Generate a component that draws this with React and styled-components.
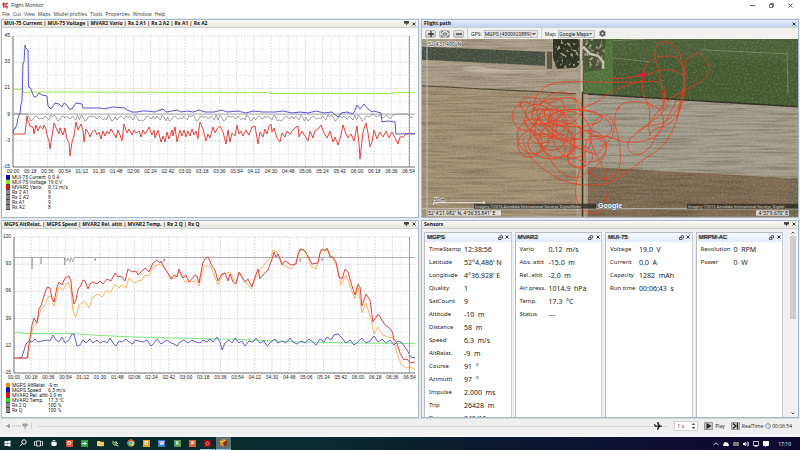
import styled, { createGlobalStyle } from 'styled-components'
import { FaShoppingBag, FaFolder, FaCloud, FaVolumeUp, FaDesktop, FaCommentAlt, FaWindows, FaCog } from 'react-icons/fa'

const GlobalStyle = createGlobalStyle`
  * {
    box-sizing: border-box;
  }

  body {
    margin: 0;
    background: #ffffff;
    color: #222222;
    font-family: "Open Sans", sans-serif;
    font-size: 5px;
    line-height: 8px;
  }

  button, input, select {
    font: inherit;
    color: inherit;
    margin: 0;
    padding: 0;
  }
`

const Window = styled.div`
  display: flex;
  flex-direction: column;
  height: 100vh;
  overflow: hidden;
`

const TitleBar = styled.header`
  display: flex;
  align-items: center;
  gap: 3px;
  height: 10px;
  padding: 0 6px 0 2px;
  background: #ffffff;
`

const Title = styled.h1`
  flex: 1;
  margin: 0;
  font-size: 5px;
  font-weight: 400;
`

const WindowButtons = styled.div`
  display: flex;
  gap: 11px;
`

const PlainButton = styled.button`
  display: flex;
  align-items: center;
  justify-content: center;
  width: 8px;
  height: 8px;
  border: 0;
  background: transparent;
`

const MenuBar = styled.nav`
  display: flex;
  gap: 3px;
  height: 8px;
  padding: 0 2px;
  background: #ffffff;

  a {
    color: #333333;
    text-decoration: none;
  }
`

const Workspace = styled.main`
  flex: 1;
  min-height: 0;
  display: grid;
  grid-template-columns: 418fr 378fr;
  grid-template-rows: 1fr 1fr;
  gap: 2px;
  padding: 1px 1px 0;
  background: #e9edf1;
`

const Panel = styled.section`
  display: flex;
  flex-direction: column;
  min-width: 0;
  min-height: 0;
  border: 1px solid #a9b8c9;
  background: ${props => props.$fill || '#ffffff'};
  overflow: hidden;
`

const PanelHeader = styled.div`
  display: flex;
  align-items: center;
  flex: none;
  gap: 2px;
  height: 8px;
  padding: 0 2px;
  border-bottom: 1px solid #cbd0d2;
  background: ${props => props.$active
    ? 'linear-gradient(#e6edfb, #c3d2ee)'
    : 'linear-gradient(#fbfaf7, #e6e5de)'};
`

const PanelTitle = styled.h2`
  flex: 1;
  margin: 0;
  font-size: 5px;
  line-height: 7px;
  font-weight: 700;
  color: #111111;
  white-space: nowrap;
`

const HeaderButton = styled.button`
  display: flex;
  align-items: center;
  justify-content: center;
  width: 5px;
  height: 6px;
  border: 0;
  background: transparent;
`

const ChartSvg = styled.svg`
  display: block;
  flex: none;
  width: 100%;
  height: auto;

  text {
    font-family: "Liberation Sans", sans-serif;
    font-size: 5px;
    fill: #222222;
  }
`

const Legend = styled.ul`
  margin: 0;
  padding: 0 4px;
  list-style: none;
  font-family: Roboto, sans-serif;
  font-size: 5px;
  line-height: 5px;
`

const LegendItem = styled.li`
  display: grid;
  grid-template-columns: 4px 34px 1fr;
  column-gap: 2px;
  align-items: center;
  height: 5px;
  white-space: nowrap;

  &::before {
    content: '';
    height: 4px;
    border-bottom: 1px solid #444444;
    background: ${props => props.$color};
  }
`

const MapToolbar = styled.div`
  display: flex;
  align-items: center;
  flex: none;
  gap: 3px;
  height: 11px;
  padding: 0 3px;
  background: #f1f1f0;
`

const ZoomButton = styled.button`
  display: flex;
  align-items: center;
  justify-content: center;
  width: 11px;
  height: 8px;
  border: 1px solid #b8b8b8;
  border-radius: 2px;
  background: linear-gradient(#e8e8e8, #c2c2c2);
`

const Divider = styled.span`
  align-self: stretch;
  width: 1px;
  background: #d0d0d0;
`

const Field = styled.label`
  display: flex;
  align-items: center;
  gap: 2px;
`

const Select = styled.select`
  width: ${props => props.$width};
  height: 8px;
  border: 1px solid #c4c4c4;
  border-radius: 0;
  appearance: none;
  font-family: Roboto, sans-serif;
  font-size: 5px;
  line-height: 6px;
  background:
    linear-gradient(45deg, transparent 50%, #777777 50%) right 3px center / 2px 2px no-repeat,
    linear-gradient(-45deg, transparent 50%, #777777 50%) right 1px center / 2px 2px no-repeat,
    #e6e6e6;
`

const MapSvg = styled.svg`
  display: block;
  flex: 1;
  min-height: 0;
  width: 100%;

  text {
    font-family: Roboto, sans-serif;
    font-size: 5px;
  }

  .credit {
    font-size: 4px;
  }

  .logo {
    font-family: "Liberation Sans", sans-serif;
    font-size: 7px;
    font-weight: 700;
  }
`

const SensorArea = styled.div`
  flex: 1;
  min-height: 0;
  display: flex;
  gap: 7px;
  padding: 3px 2px 0 2px;
  background: #f0f0f0;
`

const SensorGrid = styled.div`
  flex: 1;
  display: grid;
  grid-template-columns: repeat(4, 1fr);
  gap: 3px;
`

const SensorCard = styled.article`
  min-height: 0;
  border-left: 1px solid #b9bdc2;
  border-right: 1px solid #c9ccd0;
  border-top: 1px solid #b9bdc2;
  background: #ffffff;
  overflow: hidden;
`

const SensorHeader = styled.div`
  display: flex;
  align-items: center;
  gap: 2px;
  height: 9px;
  padding: 0 1px 0 2px;
  background: linear-gradient(#f6f9ff, #e3ebfa);
`

const SensorTitle = styled.h3`
  flex: 1;
  margin: 0;
  font-family: "Liberation Sans", sans-serif;
  font-size: 6px;
  line-height: 8px;
  font-weight: 400;
  color: #222222;
  text-shadow: 0 0 1px #555555, 1px 0 1px #888888;
`

const Readings = styled.dl`
  display: grid;
  grid-template-columns: ${props => props.$label} 1fr;
  grid-auto-rows: 13px;
  align-items: center;
  margin: 1px 0 0;
  padding-left: 4px;
  font-family: "Noto Sans", sans-serif;
  font-size: 6px;
  line-height: 13px;
  white-space: pre;

  dd {
    margin: 0;
    font-size: 7px;
  }
`

const ScrollBar = styled.div`
  display: flex;
  flex-direction: column;
  align-items: center;
  justify-content: space-between;
  width: 6px;
  margin-top: -3px;
`

const ScrollThumb = styled.div`
  flex: 1;
  width: 6px;
  margin: 0 0 91px;
  background: #cdcdcd;
`

const PlayerBar = styled.footer`
  display: flex;
  align-items: center;
  flex: none;
  gap: 6px;
  height: 19px;
  padding: 0 8px 1px 6px;
  border-top: 1px solid #d3dade;
  border-bottom: 3px solid #f4f4f4;
  background: #efefef;
`

const Timeline = styled.input`
  flex: 1;
  min-width: 0;
  height: 9px;
  appearance: none;
  background: linear-gradient(#d6d6d6, #d6d6d6) center / 100% 1px no-repeat;

  &::-webkit-slider-thumb {
    appearance: none;
    width: 8px;
    height: 8px;
    background: #222222;
    clip-path: polygon(0 25%, 12% 25%, 25% 45%, 48% 45%, 38% 0, 55% 0, 74% 45%, 100% 45%, 100% 60%, 74% 60%, 50% 100%, 38% 100%, 48% 60%, 10% 60%);
  }
`

const SpeedBox = styled.label`
  display: flex;
  align-items: center;
  width: 24px;
  height: 10px;
  padding-left: 2px;
  border: 1px solid #d0d0d0;
  background: #ffffff;

  input {
    width: 14px;
    border: 0;
    background: transparent;
  }
`

const PlayerButton = styled.button`
  display: flex;
  align-items: center;
  gap: 2px;
  border: 0;
  background: transparent;
`

const Elapsed = styled.time`
  display: flex;
  align-items: center;
  gap: 1px;
  margin-left: -4px;
`

const TaskBar = styled.nav`
  display: flex;
  align-items: center;
  justify-content: space-between;
  flex: none;
  height: 13px;
  padding-right: 9px;
  background: linear-gradient(90deg, #092b29, #0b2c2e 38%, #0a1b2e 58%, #100b32 88%, #0d0930);
  color: #ffffff;
`

const TaskApps = styled.div`
  display: flex;
  justify-content: space-between;
  width: 231px;
`

const TaskButton = styled.button`
  display: flex;
  align-items: center;
  justify-content: center;
  width: 15px;
  height: 13px;
  border: 0;
  border-bottom: 1px solid ${props => (props.$running ? '#8ec5dc' : 'transparent')};
  background: ${props => (props.$active ? '#5b7276' : 'transparent')};
  color: #ffffff;
`

const AppTile = styled.span`
  display: flex;
  align-items: center;
  justify-content: center;
  width: 7px;
  height: 7px;
  background: ${props => props.$color};
  color: #ffffff;
  font-size: 5px;
  font-weight: 700;
  line-height: 7px;
`

const Tray = styled.div`
  display: flex;
  align-items: center;
  gap: 4px;

  time {
    margin-left: 5px;
  }
`

const STEP = 17.2

// receiver level jitters by a volt or two around its baseline
const jitter = [0, 3, -1, 1, 0, 4, -2, 1, 2, -1, 3]
const receiverLevel = Array.from({ length: 190 }, (_, i) => {
  const x = 29 + i * 1.8
  return `${x.toFixed(1)},${117 + jitter[(i * 5 + Math.floor(i / 7)) % 11]}`
}).join(' ')

const currentVoltage = {
  title: 'MUI-75 Current | MUI-75 Voltage | MVAR2 Vario | Rx 2 A1 | Rx 2 A2 | Rx A1 | Rx A2',
  origin: 28,
  height: 147,
  left: 13,
  top: 36,
  bottom: 167,
  zero: 114,
  labels: ['45', '33', '21', '9', '-3', '-15'],
  series: [
    {
      color: '#8c8c8c',
      width: 0.8,
      points: `13,114 22,114 27,114 ${receiverLevel} 373,114 377,117 380,115 383,118 387,115 390,119 393,115 399,114 407,114 410,117 413,118`
    },
    {
      color: '#9be84b',
      points: '13,89 20,90 22,88 23,92 26,93 30,92 268,92.5 269,93.5 391,93.5 396,92.5 415,92.5'
    },
    {
      color: '#e0433f',
      points: '13,134 25,134 27,116 28,121 30,126 33,127 34,134 36,125 38,131 40,126 43,129 44,125 46,129 47,135 49,141 50,149 52,136 54,123 57,130 59,134 60,128 63,135 65,128 67,139 69,143 70,156 72,142 74,136 76,122 78,130 81,124 83,130 84,142 86,129 89,134 90,137 92,132 95,130 97,135 99,132 101,139 103,131 105,136 107,131 109,134 111,129 114,134 116,138 118,130 120,135 122,141 124,124 127,133 129,129 132,135 134,130 136,133 139,131 141,137 143,130 145,134 147,131 149,127 152,135 154,130 155,138 158,130 159,134 161,142 163,136 165,142 167,132 169,139 172,130 173,136 175,127 177,142 180,130 182,136 184,130 186,137 188,131 190,136 192,129 194,135 196,131 198,139 199,128 200,122 203,129 206,141 208,134 210,138 213,127 215,133 217,129 220,126 223,132 226,144 228,130 230,142 232,133 235,136 237,125 239,134 241,131 243,136 246,130 249,135 252,127 255,126 258,144 260,132 263,137 265,129 267,134 269,126 271,124 272,132 274,128 277,138 280,142 282,133 285,137 287,131 290,134 293,130 296,127 298,126 299,137 302,131 305,136 308,141 310,131 313,138 315,131 318,129 321,125 324,133 327,138 330,131 333,142 335,137 338,145 341,135 343,125 346,134 348,138 351,134 354,141 357,126 359,144 360,159 363,132 366,123 368,133 370,147 372,142 374,130 377,139 380,132 383,137 386,131 389,138 392,132 395,138 398,144 400,137 403,137 406,134 415,134'
    },
    {
      color: '#5856cf',
      points: '13,133 14,129 15,129 17,124 18,118 20,113 21,104 22,101 23,63 24,62 25,45 26,48 28,50 28.5,87 30.5,88 32,92 34,97 36,97 39,93 42,95 47,96 48,106 51,109 55,103 59,104 62,107 64,103 67,105 69,109 72,109 76,103 82,104 83,108 90,108 100,108 104,109 113,107 125,108 127,110 132,112 137,112 142,111 147,111 155,112 160,110 163,109 166,112 172,111 177,110 181,112 187,111 193,112 199,110 205,112 214,112 222,110 227,112 238,111 246,113 253,111 263,112 275,112 283,111 292,113 300,112 308,113 316,111 324,113 332,112 338,117 341,113 347,112 353,114 355,110 357,105 360,109 364,104 368,109 372,112 374,111 381,113 382,122 388,121 395,122 396,134 402,134 409,133.5 415,133.5'
    }
  ],
  legend: [
    ['#0b0bdc', 'MUI-75 Current', '0.0 A'],
    ['#7be80c', 'MUI-75 Voltage', '19.0 V'],
    ['#ec1010', 'MVAR2 Vario', '0.12 m/s'],
    ['#858585', 'Rx 2 A1', '9'],
    ['#858585', 'Rx 2 A2', '8'],
    ['#858585', 'Rx A1', '9'],
    ['#858585', 'Rx A2', '8']
  ]
}

const altitudeSpeed = {
  title: 'MGPS AltRelat. | MGPS Speed | MVAR2 Rel. altit | MVAR2 Temp. | Rx 2 Q | Rx Q',
  origin: 228,
  height: 154,
  left: 14,
  top: 236,
  bottom: 372,
  labels: ['120', '93', '66', '39', '12', '-15'],
  series: [
    { color: '#999999', width: 0.8, points: '14,256.5 32,256.5 32,268 32.4,256.5 41,256.5 41,263 41.5,256.5 64.5,256.5 64.5,264 65,256.5 67,260 68,256.5 70,261 71,256.5 73,261 74,256.5 95,256.5 95,260 96,256.5 164,256.5 164,261 165,256.5 300,256.5 300,261 301,256.5 322,256.5 322,260 323,256.5 415,256.5' },
    { color: '#80e879', points: '14,332 19,331.5 24,332.5 71,332.5 100,334.5 135,336 175,337 240,338.5 300,341 360,342 415,342.5' },
    {
      color: '#f6b464',
      points: '14,357 28,357 31,336 33,326 36,323 38,318 41,308 45,304 48,296 51,295 54,305 57,294 59,286 63,289 66,284 68,281 71,289 73,310 76,316 79,304 84,300 89,307 93,296 98,293 102,296 107,289 110,292 115,283 119,287 122,284 126,287 129,277 134,282 138,280 142,279 145,274 149,275 153,266 160,263 164,266 171,278 176,276 179,271 185,281 190,281 195,280 199,285 204,265 210,265 214,273 218,284 223,273 230,271 236,281 239,273 246,281 251,288 256,276 261,268 267,260 271,256 273,249 277,251 283,264 291,268 297,259 301,248 306,251 311,265 316,268 321,249 328,249 333,258 337,266 341,284 346,274 350,285 355,298 358,286 362,312 366,302 371,318 374,333 378,326 383,334 388,336 393,337 397,352 401,363 406,367 410,366 415,368'
    },
    {
      color: '#d94544',
      points: '14,357 27,357 30,336 32,324 34,317 37,322 39,308 41,305 43,298 45,292 47,286 50,287 52,297 54,301 57,286 59,281 62,284 65,277 69,275 71,280 72,291 74,303 76,299 78,288 80,286 83,279 85,280 88,288 90,283 93,281 97,283 100,280 103,283 107,278 111,280 115,272 118,276 121,275 125,280 128,268 132,271 136,270 138,274 142,270 145,267 149,271 153,262 157,259 160,262 161,260 165,268 168,272 171,278 174,274 177,276 179,268 183,277 186,274 189,281 195,274 197,275 199,282 203,261 205,258 208,256 212,265 215,269 218,280 222,273 225,272 228,280 230,273 233,281 236,283 239,271 245,281 248,278 252,286 255,276 258,268 260,278 263,274 268,269 272,258 274,251 276,256 278,253 282,264 285,260 291,264 296,263 298,253 300,248 304,249 308,255 312,263 318,262 320,252 322,248 325,250 327,247 330,256 333,256 336,261 339,276 342,278 345,268 348,271 352,285 355,294 358,283 360,286 362,305 366,293 370,299 373,321 378,313 382,319 385,324 388,326 392,330 394,338 397,342 400,352 404,359 407,358 410,362 415,361'
    },
    {
      color: '#6260d2',
      points: '19,357 22,356 26,343 29,340 32,341 35,338 38,341 42,340 47,339 50,340 53,334 56,339 59,341 62,336 65,342 69,339 72,333 74,333 77,345 80,344 83,339 86,342 90,338 93,342 97,339 100,342 104,340 107,342 110,337 113,342 116,345 119,340 122,341 126,338 129,341 133,343 135,339 139,340 143,341 147,339 151,345 154,342 157,338 161,343 164,341 167,339 171,342 174,343 177,345 180,341 184,339 188,342 192,339 196,341 200,342 203,339 207,341 210,338 213,341 217,336 220,341 222,349 225,342 229,339 232,342 235,337 239,342 242,340 245,345 249,340 253,341 256,337 260,342 264,340 267,345 271,341 275,338 278,342 282,340 286,342 290,337 293,341 297,343 301,340 305,342 309,338 313,341 316,344 320,338 324,341 327,336 331,339 334,334 338,333 342,337 346,342 350,339 354,344 358,341 362,337 366,342 370,340 374,335 378,341 382,338 386,342 390,339 394,344 398,340 402,342 407,349 411,356 415,357'
    }
  ],
  legend: [
    ['#f58a12', 'MGPS AltRelat.', '-9 m'],
    ['#0b0bdc', 'MGPS Speed', '6.3 m/s'],
    ['#ec1010', 'MVAR2 Rel. altit', '-2.0 m'],
    ['#1ce81c', 'MVAR2 Temp.', '17.3 °C'],
    ['#858585', 'Rx 2 Q', '100 %'],
    ['#858585', 'Rx Q', '100 %']
  ]
}

const sensors = [
  {
    name: 'MGPS',
    label: '35px',
    readings: [
      ['TimeStamp', '12:38:56'],
      ['Latitude', "52°4.486' N"],
      ['Longitude', "4°36.928' E"],
      ['Quality', '1'],
      ['SatCount', '9'],
      ['Altitude', '-10  m'],
      ['Distance', '58  m'],
      ['Speed', '6.3  m/s'],
      ['AltRelat.', '-9  m'],
      ['Course', '91  °'],
      ['Azimuth', '97  °'],
      ['Impulse', '2.000  ms'],
      ['Trip', '26428  m'],
      ['Date', '345/15']
    ]
  },
  {
    name: 'MVAR2',
    label: '29px',
    readings: [
      ['Vario', '0.12  m/s'],
      ['Abs. altit', '-15.0  m'],
      ['Rel. altit', '-2.0  m'],
      ['Air press.', '1014.9  hPa'],
      ['Temp.', '17.3  °C'],
      ['Status', '---']
    ]
  },
  {
    name: 'MUI-75',
    label: '29px',
    readings: [
      ['Voltage', '19.0  V'],
      ['Current', '0.0  A'],
      ['Capacity', '1282  mAh'],
      ['Run time', '00:06:43  s']
    ]
  },
  {
    name: 'MRPM-AC',
    label: '33px',
    readings: [
      ['Revolution', '0  RPM'],
      ['Power', '0  W']
    ]
  }
]

const tracks = [
  'M300 10 C300 -25 330 -30 360 -15 S420 10 440 40',
  'M340 20 C340 -40 375 -65 430 -68 S560 -66 640 -68 S715 -80 732 -45 C742 -20 728 0 725 15',
  'M570 -79 C610 -78 640 -84 667 -88 C700 -95 720 -106 745 -105 S780 -95 788 -88',
  'M350 20 C370 -20 395 -42 430 -38 S475 0 480 20 C500 -5 530 0 545 -20 C580 -45 630 -62 667 -72',
  'M700 10 C670 -10 664 -45 667 -85 C668 -125 705 -147 745 -146 C790 -148 796 -95 796 -60 C796 -20 780 10 770 40',
  'M730 15 C730 -20 724 -80 715 -115 C702 -140 700 -175 720 -187 C745 -196 772 -175 781 -150 C797 -100 796 -30 775 10 C755 45 720 65 690 60',
  'M775 15 C798 -40 785 -100 802 -140 L835 -157 C850 -145 865 -130 868 -112 C870 -80 840 -65 790 -42 C745 -20 720 10 700 40 C680 75 640 85 625 110 C615 140 640 155 665 147 C700 130 705 90 735 50 C755 20 765 -10 782 -30',
  'M650 80 C690 60 735 20 745 0 M783 0 C775 40 745 65 715 70 C700 72 695 80 690 92 C680 60 700 20 680 -5 M780 -10 C782 50 735 130 700 145 C660 170 620 205 570 235 C500 250 430 235 405 215 C360 190 310 150 310 100',
  'M593 15 C600 -10 640 -15 680 -5 C720 5 735 30 730 65 C720 110 640 115 610 112 C580 100 550 90 520 95',
  'M600 0 C585 20 580 45 588 70 C600 110 605 160 598 190 C580 240 525 225 500 195',
  'M485 180 C465 230 460 280 478 300 C490 325 530 335 548 312 C565 290 570 230 550 190 C530 150 500 110 515 70 S560 20 575 45 C595 75 570 120 540 125',
  'M345 30 L410 85 L470 130 L530 150 L560 120 L520 90 L460 60 L390 45',
  'M310 45 C330 75 355 110 385 155 C420 215 455 230 490 212 C520 190 560 170 558 125 C550 90 520 80 500 110 C485 150 510 195 480 190 C440 190 430 155 465 135',
  'M298 -10 C310 20 330 60 370 85 S450 105 490 140'
]

const loops = [
  [315, 35, 38, 42, 0], [355, 30, 40, 30, 20], [375, 55, 62, 40, 12], [340, 95, 48, 52, -8],
  [330, 118, 36, 40, 15], [395, 75, 50, 62, 0], [420, 60, 70, 36, 30], [455, 90, 58, 70, -12],
  [410, 110, 55, 48, 25], [480, 60, 96, 44, 8], [430, 20, 58, 40, -15], [370, 75, 34, 48, 40],
  [505, 125, 55, 48, 0], [465, 40, 80, 26, 0], [380, 125, 58, 36, 14],
  [480, 155, 38, 32, 0], [385, 20, 52, 34, -25]
]

const taskApps = ['Start', 'Search', 'Task view', 'Store', 'Player', 'Update', 'Files', 'Tools', 'Chrome', 'Outlook', 'Word', 'Sheets', 'Slides', 'Recorder', 'Flight Monitor']

const CloseIcon = () => (
  <svg width="4" height="4" viewBox="0 0 4 4">
    <path d="M.5 .5 3.5 3.5M3.5 .5 .5 3.5" stroke="#333" strokeWidth="1" />
  </svg>
)

const PanelTools = ({ pin = true }) => (
  <>
    {pin && (
      <HeaderButton aria-label="Pin panel">
        <svg width="5" height="5" viewBox="0 0 5 5">
          <path d="M0 0H5V2.5H3.5L2.5 4.5 1.5 2.5H0Z" fill="#444" />
        </svg>
      </HeaderButton>
    )}
    <HeaderButton aria-label="Close panel"><CloseIcon /></HeaderButton>
  </>
)

const timeLabel = index => {
  const seconds = index * 18
  return `${String(Math.floor(seconds / 60)).padStart(2, '0')}:${String(seconds % 60).padStart(2, '0')}`
}

const Chart = ({ chart }) => {
  const { left, top, bottom, labels } = chart
  const rowHeight = (bottom - top) / 5
  return (
    <Panel>
      <PanelHeader>
        <PanelTitle>{chart.title}</PanelTitle>
        <PanelTools />
      </PanelHeader>
      <ChartSvg viewBox={`2 ${chart.origin} 416 ${chart.height}`}>
        {Array.from({ length: 47 }, (_, i) => (
          <line key={i} x1={left + i * STEP / 2} x2={left + i * STEP / 2} y1={top} y2={bottom} stroke={i % 2 ? '#eeeeee' : '#d2d2d2'} strokeWidth="0.8" strokeDasharray={i % 2 ? 'none' : '2 1'} />
        ))}
        {Array.from({ length: 11 }, (_, i) => (
          <line key={i} x1={left} x2="415" y1={top + i * rowHeight / 2} y2={top + i * rowHeight / 2} stroke={i % 2 ? '#eeeeee' : '#d2d2d2'} strokeWidth="0.8" strokeDasharray={i % 2 ? 'none' : '2 1'} />
        ))}
        <path d={`M${left} ${top}V${bottom}H415`} fill="none" stroke="#777777" />
        {chart.zero && <line x1={left} x2="415" y1={chart.zero} y2={chart.zero} stroke="#999999" strokeWidth="0.8" />}
        {labels.map((label, i) => (
          <text key={label} x={left - 3} y={top + i * rowHeight + 1} textAnchor="end">{label}</text>
        ))}
        {Array.from({ length: 24 }, (_, i) => (
          <text key={i} x={left + i * STEP} y={bottom + 6} textAnchor="middle">{timeLabel(i)}</text>
        ))}
        {chart.series.map(line => (
          <polyline key={line.color} points={line.points} fill="none" stroke={line.color} strokeWidth={line.width || 1} strokeLinejoin="round" />
        ))}
        <line x1="409.5" x2="409.5" y1={top} y2={bottom} stroke="#d88a88" />
      </ChartSvg>
      <Legend>
        {chart.legend.map(([color, name, value]) => (
          <LegendItem key={name} $color={color}>
            <span>{name}</span>
            <span>{value}</span>
          </LegendItem>
        ))}
      </Legend>
    </Panel>
  )
}

const FlightMap = () => (
  <MapSvg viewBox="422 39 376 178" preserveAspectRatio="xMidYMid slice">
    <defs>
      <filter id="rows" x="0" y="0" width="100%" height="100%" colorInterpolationFilters="sRGB">
        <feTurbulence type="fractalNoise" baseFrequency="0.02 0.5" numOctaves="3" seed="4" />
        <feColorMatrix type="matrix" values="0 0 0 0 0.25  0 0 0 0 0.22  0 0 0 0 0.14  1.8 0 0 0 -0.7" />
      </filter>
      <filter id="grain" x="0" y="0" width="100%" height="100%" colorInterpolationFilters="sRGB">
        <feTurbulence type="fractalNoise" baseFrequency="0.5" numOctaves="2" seed="9" />
        <feColorMatrix type="matrix" values="0 0 0 0 0.9  0 0 0 0 0.9  0 0 0 0 0.8  0 1.4 0 0 -0.6" />
      </filter>
      <filter id="trees" x="0" y="0" width="100%" height="100%" colorInterpolationFilters="sRGB">
        <feTurbulence type="fractalNoise" baseFrequency="0.28" numOctaves="3" seed="2" />
        <feColorMatrix type="matrix" values="0 0 0 0 0.62  0 0 0 0 0.63  0 0 0 0 0.53  0 5 0 0 -2.7" result="spots" />
        <feComposite in="spots" in2="SourceAlpha" operator="in" result="clipped" />
        <feMerge>
          <feMergeNode in="SourceGraphic" />
          <feMergeNode in="clipped" />
        </feMerge>
      </filter>
    </defs>
    <rect x="422" y="39" width="377" height="178" fill="#a59278" />
    <path d="M422 39H583V94L422 86Z" fill="#aa9f8a" />
    <path d="M462 67 L475 66 500 70 545 71 548 76 505 74 464 71Z" fill="#c4bca9" opacity=".7" />
    <path d="M586 94 799 106V178L586 167Z" fill="#a39e8e" />
    <path d="M586 167 799 179V217H586Z" fill="#806a54" />
    <path d="M790 178H799V217H788Z" fill="#756b52" />
    <rect x="422" y="39" width="377" height="178" filter="url(#rows)" opacity=".4" />
    <path d="M422 47 545 52V66L422 60Z" fill="#454d40" />
    <path d="M547 52H552V69H547Z" fill="#59533f" />
    <path d="M422 86 576 94" stroke="#51462f" strokeWidth="1.2" />
    <path d="M583 39H799V107L583 94Z" fill="#455a32" />
    <path d="M608 39H799V62L606 56Z" fill="#4a5e38" />
    <path d="M597 39H613V96L584 94V73L603 68Z" fill="#50713b" />
    <path d="M584 94 799 107" stroke="#2f2c21" strokeWidth="1.5" />
    <path d="M613 41 650 39M612 58 650 62M700 50 787 54M787 52 788 95" stroke="#8d9471" strokeWidth="1" opacity=".65" fill="none" />
    <rect x="422" y="39" width="377" height="178" filter="url(#grain)" opacity=".3" />
    <path d="M553 39H581L583 60 576 68 557 69 553 58Z" fill="#303524" filter="url(#trees)" />
    <path d="M584 39H606L603 70 590 71 584 58Z" fill="#4a523a" filter="url(#trees)" />
    <path d="M581 39V98M583 47 590 54 598 56 603 62 603 69" fill="none" stroke="#c6c0ae" strokeWidth="2.5" />
    <path d="M576 94H588V217H576Z" fill="#b4a78f" opacity=".65" />
    <path d="M580 60V94" stroke="#8b8d70" />
    <path d="M582.5 92V217" stroke="#3c3523" strokeWidth="1.6" />
    <path d="M427 39V217M422 209H799" stroke="#c8cbd0" strokeWidth="1" opacity=".85" />
    <g transform="translate(420 105) scale(.3333)" fill="none" stroke="#f03a20" strokeWidth="2.5" opacity=".9">
      {tracks.map(d => <path key={d} d={d} />)}
      {loops.map(([x, y, rx, ry, angle]) => (
        <ellipse key={`${x}-${y}`} cx={x} cy={y} rx={rx} ry={ry} transform={`rotate(${angle} ${x} ${y})`} />
      ))}
    </g>
    <path d="M638 75H647M642.500 71V80" stroke="#f01038" strokeWidth="1.6" />
    <text x="428" y="46" stroke="#ffffff" strokeWidth="1" paintOrder="stroke" fill="#111111">52°4'31.400" N</text>
    <path d="M428 210.500H501V216H428ZM756 210.500H789V216H756Z" fill="#ffffff" opacity=".7" />
    <text x="428" y="215" fill="#111111">52°4'21.982" N, 4°36'35.841" E</text>
    <text x="788" y="215" textAnchor="end" fill="#111111">4°37'9.670" E</text>
    <text x="434" y="202" stroke="#ffffff" strokeWidth=".8" paintOrder="stroke" fill="#111111">50 m</text>
    <path d="M433.500 205V203H484V205M484 201V205" fill="none" stroke="#ffffff" strokeWidth=".8" />
    <path d="M474 204H596V209H474ZM687 204H799V209H687Z" fill="#27251f" opacity=".75" />
    <text className="credit" x="475" y="208" fill="#d9d5cb">Imagery ©2015 Aerodata International Surveys, DigitalGlobe</text>
    <text className="credit" x="688" y="208" fill="#d9d5cb">Imagery ©2015 Aerodata International Surveys, Digital</text>
    <text className="logo" x="598" y="208" stroke="#555555" strokeWidth=".8" paintOrder="stroke" fill="#ffffff">Google</text>
  </MapSvg>
)

const TaskIcon = ({ name }) => {
  switch (name) {
    case 'Start': return <FaWindows size={7} />
    case 'Search': return (
      <svg width="8" height="8" viewBox="0 0 8 8" fill="none" stroke="#fff" strokeWidth=".9">
        <circle cx="5" cy="3" r="2.200" />
        <path d="M3.400 4.600 .8 7.200" />
      </svg>
    )
    case 'Task view': return (
      <svg width="9" height="7" viewBox="0 0 9 7" fill="none" stroke="#fff" strokeWidth=".8">
        <path d="M2.500 1H6.500V6H2.500ZM1.500 1.500H.5V5.500H1.500M7.500 1.500H8.500V5.500H7.500" />
      </svg>
    )
    case 'Store': return <FaShoppingBag size={6} />
    case 'Player': return <AppTile $color="#d9533b">O</AppTile>
    case 'Update': return (
      <AppTile $color="#36a245">
        <svg width="5" height="5" viewBox="0 0 5 5"><path d="M0 2.500H4M2.500 1 4 2.500 2.500 4" fill="none" stroke="#fff" /></svg>
      </AppTile>
    )
    case 'Files': return <FaFolder size={7} color="#f0ce68" />
    case 'Tools': return (
      <svg width="7" height="7" viewBox="0 0 7 7" fill="none">
        <path d="M.5 1 3 3 3 6M1 1V4L3 5" stroke="#8bbf73" />
        <path d="M4 1V5L6.500 6M4 2 6 4" stroke="#c4d5cc" />
      </svg>
    )
    case 'Chrome': return (
      <svg width="8" height="8" viewBox="0 0 8 8">
        <circle cx="4" cy="4" r="3.500" fill="#e4c43c" />
        <path d="M.9 2.300A3.500 3.500 0 0 1 7.300 2.800H4L2.700 4.800Z" fill="#d84c3e" />
        <path d="M.9 2.300 2.800 5 4.500 5.500 3.600 7.500A3.500 3.500 0 0 1 .9 2.300Z" fill="#4aa152" />
        <circle cx="4" cy="4" r="1.600" fill="#4c88d8" stroke="#fff" strokeWidth=".5" />
      </svg>
    )
    case 'Outlook': return <AppTile $color="#e0a52a">O</AppTile>
    case 'Word': return <AppTile $color="#3f78c4">W</AppTile>
    case 'Sheets': return <AppTile $color="#4c9b56">X</AppTile>
    case 'Slides': return <AppTile $color="#d2603c">P</AppTile>
    case 'Recorder': return (
      <AppTile $color="#8c1620">
        <svg width="5" height="5" viewBox="0 0 5 5"><circle cx="2.500" cy="2.500" r="1.500" fill="none" stroke="#f09090" /></svg>
      </AppTile>
    )
    default: return (
      <svg width="9" height="8" viewBox="0 0 9 8">
        <path d="M1 2 4 0 8 1 8 6 5 8 1 6Z" fill="#e18e2c" />
        <path d="M4 3 8 1V6L5 8Z" fill="#7a3517" />
        <path d="M1 2 4 3 7 1" stroke="#f7c65b" fill="none" />
      </svg>
    )
  }
}

const App = () => (
  <Window>
    <GlobalStyle />
    <TitleBar>
      <svg width="6" height="7" viewBox="0 0 6 7">
        <path d="M0 2 2 0 3 2 5 0 6 2 4 3 6 5 5 7 3 5 1 6 1 4Z" fill="#c93c42" />
        <path d="M2 3 4 4" stroke="#fff" strokeWidth=".7" />
      </svg>
      <Title>Flight Monitor</Title>
      <WindowButtons>
        <PlainButton aria-label="Minimize">
          <svg width="5" height="5" viewBox="0 0 5 5"><path d="M0 2.500H5" stroke="#333" strokeWidth=".8" /></svg>
        </PlainButton>
        <PlainButton aria-label="Restore">
          <svg width="5" height="5" viewBox="0 0 5 5" fill="none" stroke="#333" strokeWidth=".7">
            <path d="M.5 1.500H3.500V4.500H.5ZM1.500 1.500V.5H4.500V3.500H3.500" />
          </svg>
        </PlainButton>
        <PlainButton aria-label="Close">
          <svg width="5" height="5" viewBox="0 0 5 5"><path d="M.5 .5 4.500 4.500M4.500 .5 .5 4.500" stroke="#333" strokeWidth=".8" /></svg>
        </PlainButton>
      </WindowButtons>
    </TitleBar>
    <MenuBar>
      {['File', 'Cut', 'View', 'Maps', 'Model profiles', 'Tools', 'Properties', 'Window', 'Help'].map(item => (
        <a key={item} href="#menu">{item}</a>
      ))}
    </MenuBar>

    <Workspace>
      <Chart chart={currentVoltage} />
      <Panel $fill="#f1f1f0">
        <PanelHeader $active>
          <PanelTitle>Flight path</PanelTitle>
          <PanelTools pin={false} />
        </PanelHeader>
        <MapToolbar>
          <ZoomButton aria-label="Zoom in">
            <svg width="6" height="6" viewBox="0 0 6 6"><path d="M0 3H6M3 0V6" stroke="#333" strokeWidth="1.300" /></svg>
          </ZoomButton>
          <ZoomButton aria-label="Fit to window">
            <svg width="8" height="6" viewBox="0 0 8 6" fill="none" stroke="#666">
              <path d="M.5 2V.5H2M6 .5H7.500V2M7.500 4V5.500H6M2 5.500H.5V4M2.500 2H5.500V4H2.500Z" strokeWidth=".8" />
            </svg>
          </ZoomButton>
          <ZoomButton aria-label="Zoom out">
            <svg width="6" height="6" viewBox="0 0 6 6"><path d="M0 3H6" stroke="#333" strokeWidth="1.300" /></svg>
          </ZoomButton>
          <Divider />
          <Field>
            GPS:
            <Select $width="54px"><option>MGPS (4300920889)</option></Select>
          </Field>
          <Divider />
          <Field>
            Map:
            <Select $width="37px"><option>Google Maps</option></Select>
          </Field>
          <PlainButton aria-label="Map settings"><FaCog size={7} color="#555555" /></PlainButton>
        </MapToolbar>
        <FlightMap />
      </Panel>

      <Chart chart={altitudeSpeed} />
      <Panel>
        <PanelHeader>
          <PanelTitle>Sensors</PanelTitle>
          <PanelTools />
        </PanelHeader>
        <SensorArea>
          <SensorGrid>
            {sensors.map(sensor => (
              <SensorCard key={sensor.name}>
                <SensorHeader>
                  <SensorTitle>{sensor.name}</SensorTitle>
                  <HeaderButton aria-label={`Detach ${sensor.name}`}>
                    <svg width="5" height="5" viewBox="0 0 5 5" fill="none" stroke="#333" strokeWidth=".8">
                      <path d="M.5 2.500H3V4.500H.5ZM2 2V.8H4.500V3H3.500" />
                    </svg>
                  </HeaderButton>
                  <HeaderButton aria-label={`Close ${sensor.name}`}><CloseIcon /></HeaderButton>
                </SensorHeader>
                <Readings $label={sensor.label}>
                  {sensor.readings.flatMap(([name, value]) => [
                    <dt key={name}>{name}</dt>,
                    <dd key={`${name}-value`}>{value}</dd>
                  ])}
                </Readings>
              </SensorCard>
            ))}
          </SensorGrid>
          <ScrollBar>
            <svg width="6" height="7" viewBox="0 0 6 7"><path d="M1.500 4.500 3 3 4.500 4.500" fill="none" stroke="#555" /></svg>
            <ScrollThumb />
            <svg width="6" height="7" viewBox="0 0 6 7"><path d="M1.500 2.500 3 4 4.500 2.500" fill="none" stroke="#555" /></svg>
          </ScrollBar>
        </SensorArea>
      </Panel>
    </Workspace>

    <PlayerBar>
      <svg width="26" height="6" viewBox="0 0 26 6">
        <path d="M0 3H4M3 1V5" stroke="#888" strokeWidth="1.200" />
        <path d="M6 3H15" stroke="#aaa" strokeDasharray="1 1" />
        <path d="M17 1H21V3H17ZM19 3V6" stroke="#888" fill="#bbb" strokeWidth=".8" />
        <path d="M25.500 0V6" stroke="#ccc" />
      </svg>
      <Timeline type="range" aria-label="Flight time" min="0" max="100" defaultValue="99" />
      <SpeedBox>
        <input type="text" aria-label="Playback speed" defaultValue="1 x" />
        <svg width="5" height="8" viewBox="0 0 5 8"><path d="M.5 3 2.500 1 4.500 3ZM.5 5 2.500 7 4.500 5Z" fill="#555" /></svg>
      </SpeedBox>
      <PlayerButton>
        <svg width="9" height="8" viewBox="0 0 9 8">
          <path d="M.5 .5H8.500V7.500H.5Z" fill="#c8c8c8" stroke="#888" strokeWidth=".8" />
          <path d="M2.500 1 7.500 4 2.500 7Z" fill="#222" />
        </svg>
        Play
      </PlayerButton>
      <PlayerButton>
        <svg width="9" height="8" viewBox="0 0 9 8">
          <path d="M.5 .5H8.500V7.500H.5Z" fill="#c8c8c8" stroke="#888" strokeWidth=".8" />
          <path d="M2 1.500 5 4 2 6.500M6.500 1V7" fill="none" stroke="#222" strokeWidth="1.200" />
        </svg>
        RealTime
      </PlayerButton>
      <Elapsed>
        <svg width="6" height="6" viewBox="0 0 6 6">
          <circle cx="3" cy="3" r="2.400" fill="#f3f7fb" stroke="#5b9bd5" />
          <path d="M3 1.500V3H4.200" fill="none" stroke="#d79a32" strokeWidth=".7" />
        </svg>
        00:06:54
      </Elapsed>
    </PlayerBar>

    <TaskBar>
      <TaskApps>
        {taskApps.map((name, i) => (
          <TaskButton key={name} aria-label={name} $running={i > 12} $active={i === 14}>
            <TaskIcon name={name} />
          </TaskButton>
        ))}
      </TaskApps>
      <Tray>
        <svg width="6" height="4" viewBox="0 0 6 4"><path d="M.5 3 3 .8 5.500 3" fill="none" stroke="#fff" strokeWidth=".8" /></svg>
        <FaCloud size={6} />
        <svg width="6" height="4" viewBox="0 0 6 4"><path d="M.5 .5H5.500V3.500H.5Z" fill="#777" stroke="#aaa" strokeWidth=".6" /></svg>
        <FaVolumeUp size={6} />
        <FaDesktop size={6} />
        <FaCommentAlt size={6} />
        <time>17:10</time>
      </Tray>
    </TaskBar>
  </Window>
)

export default App
